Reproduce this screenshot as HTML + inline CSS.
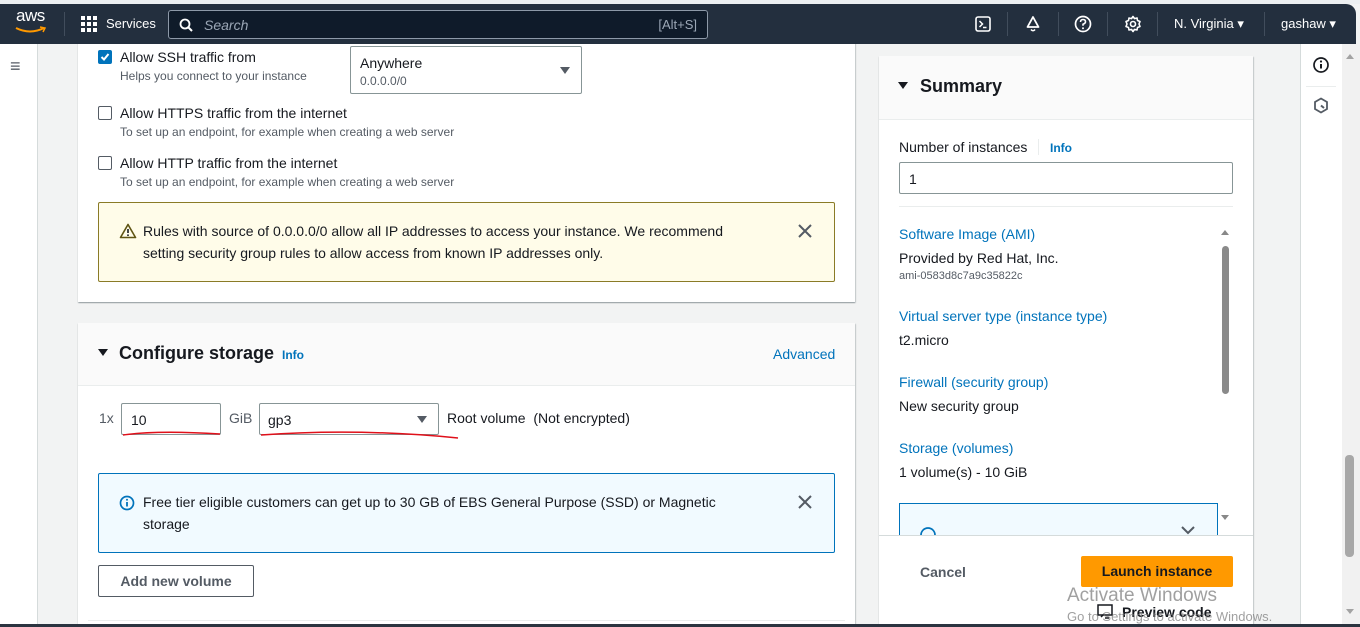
<!DOCTYPE html>
<html><head><meta charset="utf-8"><style>
*{box-sizing:border-box;margin:0;padding:0}
html,body{width:1360px;height:627px;overflow:hidden}
body{position:relative;background:#f2f3f3;font-family:"Liberation Sans",sans-serif;color:#16191f;font-size:14px}
.a{position:absolute}
.top{left:0;top:0;width:1360px;height:4px;background:#eceff1;z-index:10}
.nav{left:0;top:4px;width:1356px;height:40px;background:#232f3e;border-top-right-radius:10px;color:#fff;z-index:10}
.sep{width:1px;height:24px;background:#414d5c;top:8px}
.side{left:0;top:44px;width:38px;height:583px;background:#fff;border-right:1px solid #d5dbdb}
.card{background:#fff;box-shadow:0 1px 1px rgba(0,28,36,.3),1px 1px 1px rgba(0,28,36,.15);}
.cb{width:14px;height:14px;border:1px solid #545b64;border-radius:2px;background:#fff}
.lbl{font-size:14px;color:#16191f}
.sub{font-size:12px;color:#545b64}
.link{color:#0073bb}
.inp{border:1px solid #879596;border-radius:2px;background:#fff}
.tri{width:0;height:0;border-left:5px solid transparent;border-right:5px solid transparent;border-top:7px solid #545b64}
</style></head><body>
<div class="a side"><div class="a" style="left:10px;top:14px;font-size:18px;color:#545b64;line-height:16px">≡</div></div>

<!-- card 1 -->
<div class="a card" style="left:78px;top:30px;width:777px;height:272px"></div>
<div class="a cb" style="left:98px;top:50px;background:#0073bb;border-color:#0073bb"><svg width="14" height="14" style="position:absolute;left:-1px;top:-1px"><path d="M3.5 7 L6 9.5 L10.5 4" stroke="#fff" stroke-width="2" fill="none"/></svg></div>
<div class="a lbl" style="left:120px;top:49px">Allow SSH traffic from</div>
<div class="a sub" style="left:120px;top:69px">Helps you connect to your instance</div>
<div class="a inp" style="left:350px;top:46px;width:232px;height:48px">
  <div class="a" style="left:9px;top:8px;font-size:14px">Anywhere</div>
  <div class="a sub" style="left:9px;top:27px">0.0.0.0/0</div>
  <div class="a tri" style="left:209px;top:20px"></div>
</div>
<div class="a cb" style="left:98px;top:106px"></div>
<div class="a lbl" style="left:120px;top:105px">Allow HTTPS traffic from the internet</div>
<div class="a sub" style="left:120px;top:125px">To set up an endpoint, for example when creating a web server</div>
<div class="a cb" style="left:98px;top:156px"></div>
<div class="a lbl" style="left:120px;top:155px">Allow HTTP traffic from the internet</div>
<div class="a sub" style="left:120px;top:175px">To set up an endpoint, for example when creating a web server</div>
<div class="a" style="left:98px;top:202px;width:737px;height:80px;background:#fffce9;border:1px solid #8a7b26;border-radius:2px">
  <svg class="a" style="left:20px;top:20px" width="18" height="16"><path d="M9 1.5 L16.5 14.5 H1.5 Z" stroke="#5f5413" stroke-width="1.6" fill="none" stroke-linejoin="round"/><path d="M9 6 V10" stroke="#16191f" stroke-width="1.6"/><circle cx="9" cy="12.2" r=".9" fill="#16191f"/></svg>
  <div class="a" style="left:44px;top:17px;font-size:14px;line-height:22px;width:620px">Rules with source of 0.0.0.0/0 allow all IP addresses to access your instance. We recommend setting security group rules to allow access from known IP addresses only.</div>
  <svg class="a" style="left:699px;top:21px" width="14" height="14"><path d="M1 1 L13 13 M13 1 L1 13" stroke="#545b64" stroke-width="2"/></svg>
</div>

<!-- card 2 -->
<div class="a card" style="left:78px;top:323px;width:777px;height:304px"></div>
<div class="a" style="left:78px;top:323px;width:777px;height:63px;background:#fafafa;border-bottom:1px solid #eaeded"></div>
<div class="a tri" style="left:98px;top:349px;border-top-color:#16191f"></div>
<div class="a" style="left:119px;top:343px;font-size:18px;font-weight:bold">Configure storage</div>
<div class="a link" style="left:282px;top:348px;font-size:12px;font-weight:bold">Info</div>
<div class="a link" style="left:773px;top:346px;font-size:14px">Advanced</div>
<div class="a" style="left:99px;top:410px;color:#545b64">1x</div>
<div class="a inp" style="left:121px;top:403px;width:100px;height:32px"><div class="a" style="left:9px;top:8px">10</div></div>
<div class="a" style="left:229px;top:410px;color:#545b64">GiB</div>
<div class="a inp" style="left:259px;top:403px;width:180px;height:32px"><div class="a" style="left:8px;top:8px">gp3</div><div class="a tri" style="left:157px;top:12px"></div></div>
<div class="a" style="left:447px;top:410px">Root volume&nbsp; (Not encrypted)</div>
<svg class="a" style="left:118px;top:428px" width="350" height="16"><path d="M5 7 Q40 2 102 6" stroke="#e0101a" stroke-width="1.5" fill="none"/><path d="M143 7 Q240 0 340 10" stroke="#e0101a" stroke-width="1.5" fill="none"/></svg>
<div class="a" style="left:98px;top:473px;width:737px;height:80px;background:#f1faff;border:1px solid #0073bb;border-radius:2px">
  <svg class="a" style="left:20px;top:21px" width="16" height="16"><circle cx="8" cy="8" r="6.5" stroke="#0073bb" stroke-width="1.7" fill="none"/><path d="M8 7 V11.5" stroke="#0073bb" stroke-width="1.8"/><circle cx="8" cy="4.8" r="1" fill="#0073bb"/></svg>
  <div class="a" style="left:44px;top:17px;line-height:22px;width:620px">Free tier eligible customers can get up to 30 GB of EBS General Purpose (SSD) or Magnetic storage</div>
  <svg class="a" style="left:699px;top:21px" width="14" height="14"><path d="M1 1 L13 13 M13 1 L1 13" stroke="#545b64" stroke-width="2"/></svg>
</div>
<div class="a" style="left:98px;top:565px;width:156px;height:32px;border:1px solid #545b64;border-radius:2px;background:#fff;font-weight:bold;color:#545b64;text-align:center;line-height:30px">Add new volume</div>
<div class="a" style="left:88px;top:620px;width:757px;height:1px;background:#eaeded"></div>

<!-- summary -->
<div class="a card" style="left:879px;top:56px;width:374px;height:571px"></div>
<div class="a" style="left:879px;top:56px;width:374px;height:64px;background:#fafafa;border-bottom:1px solid #eaeded"></div>
<div class="a tri" style="left:898px;top:82px;border-top-color:#16191f"></div>
<div class="a" style="left:920px;top:76px;font-size:18px;font-weight:bold">Summary</div>
<div class="a" style="left:899px;top:139px">Number of instances</div>
<div class="a" style="left:1038px;top:139px;width:1px;height:16px;background:#eaeded"></div>
<div class="a link" style="left:1050px;top:141px;font-size:12px;font-weight:bold">Info</div>
<div class="a inp" style="left:899px;top:162px;width:334px;height:32px"><div class="a" style="left:9px;top:8px">1</div></div>
<div class="a" style="left:899px;top:206px;width:334px;height:1px;background:#eaeded"></div>
<div class="a link" style="left:899px;top:226px">Software Image (AMI)</div>
<div class="a" style="left:899px;top:250px">Provided by Red Hat, Inc.</div>
<div class="a sub" style="left:899px;top:270px;font-size:11px">ami-0583d8c7a9c35822c</div>
<div class="a link" style="left:899px;top:308px">Virtual server type (instance type)</div>
<div class="a" style="left:899px;top:332px">t2.micro</div>
<div class="a link" style="left:899px;top:374px">Firewall (security group)</div>
<div class="a" style="left:899px;top:398px">New security group</div>
<div class="a link" style="left:899px;top:440px">Storage (volumes)</div>
<div class="a" style="left:899px;top:464px">1 volume(s) - 10 GiB</div>
<div class="a" style="left:899px;top:503px;width:319px;height:32px;border:1px solid #0073bb;border-bottom:none;background:#f1faff">
  <svg class="a" style="left:20px;top:20px" width="16" height="12"><path d="M1 11 A7 7 0 0 1 15 11" stroke="#0073bb" stroke-width="1.7" fill="none"/></svg>
  <svg class="a" style="left:281px;top:20px" width="14" height="12"><path d="M1 3 L7 9 L13 3" stroke="#545b64" stroke-width="2" fill="none"/></svg>
</div>
<div class="a" style="left:1221px;top:230px;border-left:4px solid transparent;border-right:4px solid transparent;border-bottom:5px solid #888"></div>
<div class="a" style="left:1222px;top:246px;width:7px;height:148px;background:#8a8a8a;border-radius:4px"></div>
<div class="a" style="left:1221px;top:515px;border-left:4px solid transparent;border-right:4px solid transparent;border-top:5px solid #888"></div>
<div class="a" style="left:879px;top:535px;width:374px;height:92px;background:#fff;border-top:1px solid #d5dbdb"></div>
<div class="a" style="left:920px;top:564px;font-weight:bold;color:#545b64">Cancel</div>
<div class="a" style="left:1081px;top:556px;width:152px;height:31px;background:#ff9900;border-radius:2px;text-align:center;line-height:31px;font-weight:bold;color:#16191f">Launch instance</div>
<svg class="a" style="left:1097px;top:604px" width="17" height="15"><rect x="1" y="1" width="14" height="10" stroke="#16191f" stroke-width="1.5" fill="none"/><path d="M4 13 L7 10 M8 14 H12" stroke="#16191f" stroke-width="1.5"/></svg>
<div class="a" style="left:1122px;top:604px;font-weight:bold;color:#16191f">Preview code</div>
<div class="a" style="left:1067px;top:585px;font-size:19px;color:rgba(120,120,120,.7)">Activate Windows</div>
<div class="a" style="left:1067px;top:609px;font-size:13px;color:rgba(120,120,120,.7)">Go to Settings to activate Windows.</div>

<!-- right rail -->
<div class="a" style="left:1300px;top:44px;width:42px;height:583px;background:#fff;border-left:1px solid #d5dbdb"></div>
<svg class="a" style="left:1312px;top:56px" width="18" height="18"><circle cx="9" cy="9" r="7" stroke="#16191f" stroke-width="1.7" fill="none"/><path d="M9 8 V12.5" stroke="#16191f" stroke-width="2"/><circle cx="9" cy="5.5" r="1.1" fill="#16191f"/></svg>
<div class="a" style="left:1306px;top:86px;width:30px;height:1px;background:#eaeded"></div>
<svg class="a" style="left:1313px;top:97px" width="16" height="18"><path d="M8 1.5 L14 5 V12 L8 15.5 L2 12 V5 Z" stroke="#545b64" stroke-width="1.8" fill="none"/><path d="M8 8.5 L11 11" stroke="#545b64" stroke-width="2"/></svg>
<div class="a" style="left:1342px;top:44px;width:18px;height:583px;background:#f1f1f1"></div>
<div class="a" style="left:1346px;top:54px;border-left:4px solid transparent;border-right:4px solid transparent;border-bottom:5px solid #a3a3a3"></div>
<div class="a" style="left:1345px;top:455px;width:9px;height:102px;background:#a8a8a8;border-radius:4px"></div>
<div class="a" style="left:1346px;top:609px;border-left:4px solid transparent;border-right:4px solid transparent;border-top:5px solid #a3a3a3"></div>
<div class="a" style="left:0;top:624px;width:1360px;height:3px;background:#2b3440;z-index:10"></div>

<div class="a top"></div>
<div class="a nav">
  <div class="a" style="left:16px;top:2px;font-size:17px;letter-spacing:-.5px">aws</div>
  <svg class="a" style="left:14px;top:22px" width="34" height="10"><path d="M2 2 Q16 9 30 2" stroke="#ff9900" stroke-width="2" fill="none"/><path d="M26 1 L31 2 L29 6" stroke="#ff9900" stroke-width="1.5" fill="none"/></svg>
  <div class="a sep" style="left:64px"></div>
  <svg class="a" style="left:81px;top:12px" width="16" height="16" fill="#fff"><rect x="0" y="0" width="4" height="4"/><rect x="6" y="0" width="4" height="4"/><rect x="12" y="0" width="4" height="4"/><rect x="0" y="6" width="4" height="4"/><rect x="6" y="6" width="4" height="4"/><rect x="12" y="6" width="4" height="4"/><rect x="0" y="12" width="4" height="4"/><rect x="6" y="12" width="4" height="4"/><rect x="12" y="12" width="4" height="4"/></svg>
  <div class="a" style="left:106px;top:12px;font-size:13px">Services</div>
  <div class="a" style="left:168px;top:6px;width:540px;height:29px;background:#0f1b2a;border:1px solid #8d99a8;border-radius:3px">
    <svg class="a" style="left:10px;top:7px" width="14" height="14"><circle cx="6" cy="6" r="4.5" stroke="#fff" stroke-width="1.8" fill="none"/><path d="M9 9 L13 13" stroke="#fff" stroke-width="2"/></svg>
    <div class="a" style="left:35px;top:6px;font-size:14px;font-style:italic;color:#9ba7b6">Search</div>
    <div class="a" style="right:10px;top:6px;font-size:13px;color:#9ba7b6">[Alt+S]</div>
  </div>
  <svg class="a" style="left:975px;top:12px" width="16" height="16"><rect x="1" y="1" width="14" height="14" rx="2" stroke="#fff" stroke-width="1.6" fill="none"/><path d="M4.5 5 L7.5 8 L4.5 11 M8 11.5 H11.5" stroke="#fff" stroke-width="1.5" fill="none"/></svg>
  <div class="a sep" style="left:1007px"></div>
  <svg class="a" style="left:1024px;top:11px" width="18" height="18"><path d="M9 2 L14.5 12 H3.5 Z" stroke="#fff" stroke-width="1.8" fill="none" stroke-linejoin="round"/><path d="M7 14.5 Q9 17 11 14.5" stroke="#fff" stroke-width="1.6" fill="none"/></svg>
  <div class="a sep" style="left:1058px"></div>
  <svg class="a" style="left:1074px;top:11px" width="18" height="18"><circle cx="9" cy="9" r="7.5" stroke="#fff" stroke-width="1.7" fill="none"/><path d="M6.5 7 Q6.5 4.5 9 4.5 Q11.5 4.5 11.5 6.8 Q11.5 8.3 9 9.3 V10.8" stroke="#fff" stroke-width="1.6" fill="none"/><circle cx="9" cy="13.2" r="1" fill="#fff"/></svg>
  <div class="a sep" style="left:1107px"></div>
  <svg class="a" style="left:1124px;top:11px" width="18" height="18"><path d="M9 1.5 L10.5 3.6 L13 3 L13.5 5.5 L16 6.5 L15 9 L16 11.5 L13.5 12.5 L13 15 L10.5 14.4 L9 16.5 L7.5 14.4 L5 15 L4.5 12.5 L2 11.5 L3 9 L2 6.5 L4.5 5.5 L5 3 L7.5 3.6 Z" stroke="#fff" stroke-width="1.6" fill="none" stroke-linejoin="round"/><circle cx="9" cy="9" r="2.5" stroke="#fff" stroke-width="1.6" fill="none"/></svg>
  <div class="a sep" style="left:1157px"></div>
  <div class="a" style="left:1174px;top:12px;font-size:13px">N. Virginia ▾</div>
  <div class="a sep" style="left:1264px"></div>
  <div class="a" style="left:1281px;top:12px;font-size:13px">gashaw ▾</div>
</div>
</body></html>
